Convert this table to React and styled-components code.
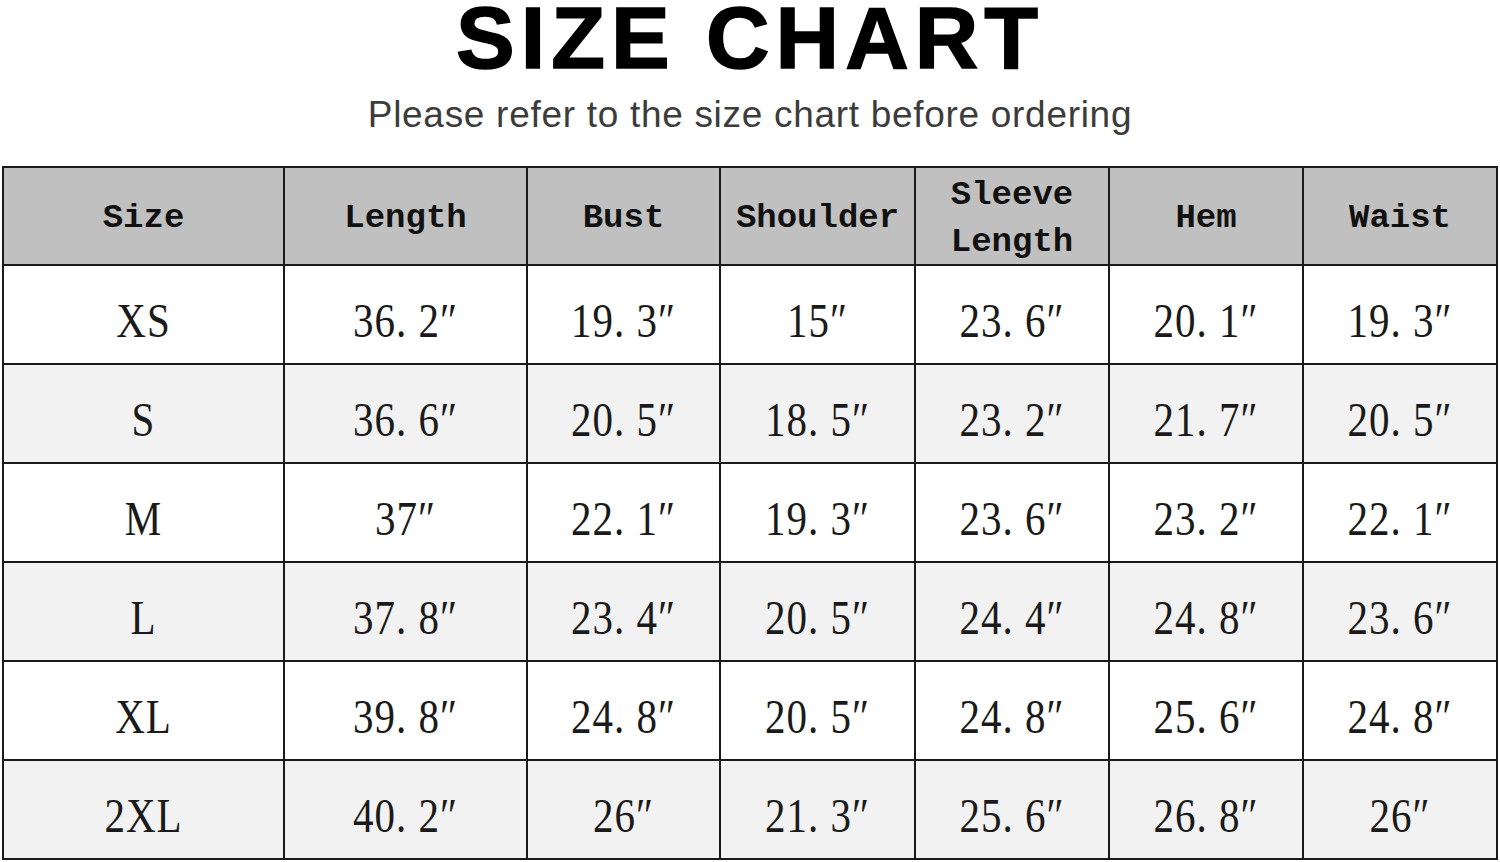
import React from "react";
import styled, { createGlobalStyle } from "styled-components";

const GlobalStyle = createGlobalStyle`
  html, body {
    margin: 0;
    padding: 0;
    background: #ffffff;
  }
  body {
    font-family: "Liberation Sans", Arial, sans-serif;
    color: #111;
  }
`;

const Page = styled.div`
  width: 1500px;
  display: flex;
  flex-direction: column;
  align-items: center;
`;

const Title = styled.h1`
  margin: 0;
  font-family: "Liberation Sans", Arial, sans-serif;
  font-weight: 700;
  font-size: 88px;
  line-height: 76px;
  letter-spacing: 6px;
  color: #000;
  -webkit-text-stroke: 1.5px #000;
`;

const Subtitle = styled.p`
  margin: 19px 0 31px;
  font-family: "Liberation Sans", Arial, sans-serif;
  font-size: 37px;
  line-height: 40px;
  letter-spacing: 0.7px;
  color: #3c3c3c;
`;

const Chart = styled.div`
  align-self: flex-start;
  margin-left: 2px;
  display: grid;
  grid-template-columns: 281px 243px 193px 195px 194px 194px 194px;
  grid-template-rows: 98px repeat(6, 99px);
  border-left: 2px solid #1a1a1a;
  border-top: 2px solid #1a1a1a;
`;

const HeadCell = styled.div`
  display: flex;
  align-items: center;
  justify-content: center;
  padding-top: 5px;
  text-align: center;
  background: #c0c0c0;
  border-right: 2px solid #1a1a1a;
  border-bottom: 2px solid #1a1a1a;
  font-family: "Liberation Mono", "Courier New", monospace;
  font-weight: 700;
  font-size: 34px;
  line-height: 47px;
  color: #111;
`;

const Cell = styled.div`
  display: flex;
  align-items: center;
  justify-content: center;
  padding-top: 10px;
  background: ${(p) => (p.$shade ? "#f2f2f2" : "#ffffff")};
  border-right: 2px solid #1a1a1a;
  border-bottom: 2px solid #1a1a1a;
  font-family: "Liberation Serif", "Times New Roman", serif;
  font-size: 41px;
  letter-spacing: 1px;
  color: #1a1a1a;
`;

const Value = styled.span`
  display: inline-block;
  transform: scaleY(1.2);
`;

const headers = [
  ["Size"],
  ["Length"],
  ["Bust"],
  ["Shoulder"],
  ["Sleeve", "Length"],
  ["Hem"],
  ["Waist"],
];

const rows = [
  ["XS", "36. 2″", "19. 3″", "15″", "23. 6″", "20. 1″", "19. 3″"],
  ["S", "36. 6″", "20. 5″", "18. 5″", "23. 2″", "21. 7″", "20. 5″"],
  ["M", "37″", "22. 1″", "19. 3″", "23. 6″", "23. 2″", "22. 1″"],
  ["L", "37. 8″", "23. 4″", "20. 5″", "24. 4″", "24. 8″", "23. 6″"],
  ["XL", "39. 8″", "24. 8″", "20. 5″", "24. 8″", "25. 6″", "24. 8″"],
  ["2XL", "40. 2″", "26″", "21. 3″", "25. 6″", "26. 8″", "26″"],
];

export default function App() {
  return (
    <Page>
      <GlobalStyle />
      <Title>SIZE CHART</Title>
      <Subtitle>Please refer to the size chart before ordering</Subtitle>
      <Chart>
        {headers.map((lines) => (
          <HeadCell key={lines.join(" ")}>
            <div>
              {lines.map((l) => (
                <div key={l}>{l}</div>
              ))}
            </div>
          </HeadCell>
        ))}
        {rows.map((row, ri) =>
          row.map((val, ci) => (
            <Cell key={ri + "-" + ci} $shade={ri % 2 === 1}>
              <Value>{val}</Value>
            </Cell>
          ))
        )}
      </Chart>
    </Page>
  );
}
